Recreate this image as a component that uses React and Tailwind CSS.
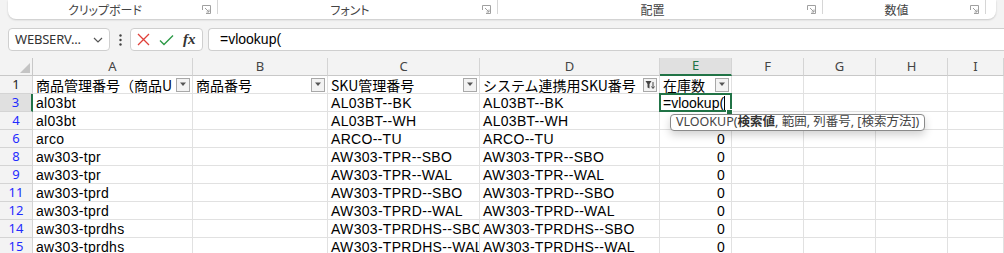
import React from "react";

const rows = [
  { n: "3", a: "al03bt", c: "AL03BT--BK", d: "AL03BT--BK", active: true },
  { n: "4", a: "al03bt", c: "AL03BT--WH", d: "AL03BT--WH", e: "" },
  { n: "6", a: "arco", c: "ARCO--TU", d: "ARCO--TU", e: "0" },
  { n: "8", a: "aw303-tpr", c: "AW303-TPR--SBO", d: "AW303-TPR--SBO", e: "0" },
  { n: "9", a: "aw303-tpr", c: "AW303-TPR--WAL", d: "AW303-TPR--WAL", e: "0" },
  { n: "11", a: "aw303-tprd", c: "AW303-TPRD--SBO", d: "AW303-TPRD--SBO", e: "0" },
  { n: "12", a: "aw303-tprd", c: "AW303-TPRD--WAL", d: "AW303-TPRD--WAL", e: "0" },
  { n: "14", a: "aw303-tprdhs", c: "AW303-TPRDHS--SBO", d: "AW303-TPRDHS--SBO", e: "0" },
  { n: "15", a: "aw303-tprdhs", c: "AW303-TPRDHS--WAL", d: "AW303-TPRDHS--WAL", e: "0" },
];

function Launcher() {
  return (
    <svg width="9" height="9" viewBox="0 0 9 9" className="shrink-0">
      <path d="M0.5 5V0.5H8.5V8.5H4" fill="none" stroke="#a0a0a0" strokeWidth="1" />
      <path d="M3 3L7 7M7 4.5V7H4.5" fill="none" stroke="#a0a0a0" strokeWidth="1" />
    </svg>
  );
}

function Group({ label, width }) {
  return (
    <div className={`flex items-center h-full ${width}`}>
      <span className="flex-1 text-center text-[12px] text-[#444] [font-feature-settings:'palt']">{label}</span>
      <Launcher />
      <div className="w-px h-[14px] bg-[#d6d6d6] ml-[6px] self-start" />
    </div>
  );
}

function DropButton({ filtered }) {
  return (
    <div className="shrink-0 w-[14px] h-[14px] mr-[2px] border border-[#a8a8a8] bg-[#f3f3f3] flex items-center justify-center">
      {filtered ? (
        <svg width="10" height="10" viewBox="0 0 10 10">
          <path d="M0.5 1H6.5L4.5 4V8.5L2.5 7.5V4Z" fill="#444" />
          <path d="M8 2V8M6.5 6.5L8 8.5L9.5 6.5" fill="none" stroke="#444" strokeWidth="1" />
        </svg>
      ) : (
        <svg width="8" height="5" viewBox="0 0 8 5">
          <path d="M1 0.5H7L4 4Z" fill="#555" />
        </svg>
      )}
    </div>
  );
}

const cellBase =
  "h-[18px] border-r border-b border-[#e1e1e1] bg-white overflow-hidden whitespace-nowrap text-[14px] leading-[19px] text-black tracking-[0.3px]";

function HeadCell({ text, filtered }) {
  return (
    <div className={`${cellBase} flex items-center`}>
      <span className="flex-1 min-w-0 overflow-hidden whitespace-nowrap pl-[3px] leading-[19px] self-stretch font-['Noto_Sans_CJK_JP',sans-serif] tracking-normal">
        {text}
      </span>
      <DropButton filtered={filtered} />
    </div>
  );
}

export default function App() {
  const letters = ["A", "B", "C", "D", "E", "F", "G", "H", "I"];
  return (
    <div className="w-[1004px] h-[253px] overflow-hidden bg-[#f3f3f3] font-['Noto_Sans','Noto_Sans_CJK_JP',sans-serif]">
      {/* Ribbon group labels */}
      <div className="h-[19px] ml-[8px] mr-[8px] bg-white rounded-b-[8px] shadow-[0_1px_2px_rgba(0,0,0,0.18)] flex font-['Noto_Sans_CJK_JP',sans-serif]">
        <Group label="クリップボード" width="w-[210px]" />
        <Group label="フォント" width="w-[280px]" />
        <Group label="配置" width="w-[325px]" />
        <Group label="数値" width="w-[163px]" />
      </div>

      {/* Formula bar */}
      <div className="mt-[9px] h-[23px] flex items-stretch pl-[8px]">
        <div className="w-[102px] bg-white border border-[#cfcfcf] rounded-[4px] flex items-center pl-[6px] pr-[6px]">
          <span className="flex-1 text-[13px] text-[#333] tracking-[-0.2px]">WEBSERV...</span>
          <svg width="10" height="6" viewBox="0 0 10 6">
            <path d="M1 1L5 5L9 1" fill="none" stroke="#555" strokeWidth="1.2" />
          </svg>
        </div>
        <div className="w-[20px] flex items-center justify-center">
          <svg width="3" height="12" viewBox="0 0 3 12">
            <circle cx="1.5" cy="1.5" r="1.2" fill="#444" />
            <circle cx="1.5" cy="6" r="1.2" fill="#444" />
            <circle cx="1.5" cy="10.5" r="1.2" fill="#444" />
          </svg>
        </div>
        <div className="w-[73px] bg-white border border-[#cfcfcf] rounded-[4px] flex items-center pl-[6px] gap-[9px]">
          <svg width="13" height="13" viewBox="0 0 13 13">
            <path d="M1 1L12 12M12 1L1 12" stroke="#e0403a" strokeWidth="1.3" />
          </svg>
          <svg width="15" height="12" viewBox="0 0 15 12">
            <path d="M1 6.5L5 10.5L14 1.5" fill="none" stroke="#2d9a47" strokeWidth="1.4" />
          </svg>
          <span className="text-[15px] italic font-bold text-[#333] font-['Liberation_Serif',serif] leading-none">fx</span>
        </div>
        <div className="flex-1 ml-[5px] bg-white border border-[#cfcfcf] border-r-0 rounded-l-[4px] flex items-center pl-[11px]">
          <span className="text-[14px] text-black font-['Liberation_Sans',sans-serif]">=vlookup(</span>
        </div>
      </div>

      {/* Sheet grid */}
      <div className="mt-[7px] grid grid-cols-[33px_160px_135px_152px_180px_72px_72px_72px_72px_56px] font-['Liberation_Sans','Noto_Sans_CJK_JP',sans-serif]">
        {/* column headers */}
        <div className="h-[18px] border-r border-b border-[#c8c8c8] bg-[#f3f3f3] flex items-end justify-end p-[2px]">
          <svg width="10" height="10" viewBox="0 0 10 10">
            <path d="M10 0V10H0Z" fill="#c4c4c4" />
          </svg>
        </div>
        {letters.map((l) => (
          <div
            key={l}
            className={`h-[18px] border-r border-[#d4d4d4] flex items-center justify-center text-[13px] font-['Noto_Sans',sans-serif] ${
              l === "E"
                ? "bg-[#e0e0e0] text-[#217346] border-b-2 border-b-[#217346]"
                : "bg-[#f3f3f3] text-[#444] border-b border-b-[#c8c8c8]"
            }`}
          >
            {l}
          </div>
        ))}

        {/* row 1: table header */}
        <div className="h-[18px] border-r border-b border-[#d4d4d4] bg-[#f3f3f3] flex items-center justify-center text-[13px] text-[#222] font-['Noto_Sans',sans-serif]">
          1
        </div>
        <HeadCell text="商品管理番号（商品U" />
        <HeadCell text="商品番号" />
        <HeadCell text="SKU管理番号" />
        <HeadCell text="システム連携用SKU番号" filtered />
        <HeadCell text="在庫数" />
        <div className={cellBase} />
        <div className={cellBase} />
        <div className={cellBase} />
        <div className={cellBase} />

        {rows.map((r) => (
          <React.Fragment key={r.n}>
            <div
              className={`h-[18px] border-b border-[#d4d4d4] flex items-center justify-center text-[13px] text-[#1f2bff] font-['Noto_Sans',sans-serif] ${
                r.active ? "bg-[#e0e0e0] border-r-2 border-r-[#217346]" : "bg-[#f3f3f3] border-r border-r-[#d4d4d4]"
              }`}
            >
              {r.n}
            </div>
            <div className={`${cellBase} pl-[3px]`}>{r.a}</div>
            <div className={cellBase} />
            <div className={`${cellBase} pl-[3px]`}>{r.c}</div>
            <div className={`${cellBase} pl-[3px]`}>{r.d}</div>
            {r.active ? (
              <div className={`${cellBase} relative overflow-visible pl-[3px] tracking-normal`}>
                <span>=vlookup(</span>
                <span className="inline-block w-px h-[14px] bg-black align-[-2px]" />
                <div className="absolute -left-px -top-px w-[73px] h-[19px] border-2 border-[#217346] pointer-events-none" />
                <div className="absolute right-[-2px] bottom-[-4px] w-[7px] h-[6px] bg-[#217346] border border-white" />
                <div className="absolute left-[10px] top-[20px] z-10 h-[17px] px-[5px] bg-white border border-[#8a8a8a] rounded-[4px] shadow-[0_4px_8px_rgba(0,0,0,0.18)] flex items-center text-[12.5px] text-[#444] font-['Noto_Sans','Noto_Sans_CJK_JP',sans-serif] leading-none">
                  VLOOKUP(<b className="text-[#333]">検索値</b>, 範囲, 列番号, [検索方法])
                </div>
              </div>
            ) : (
              <div className={`${cellBase} text-right pr-[6px]`}>{r.e}</div>
            )}
            <div className={cellBase} />
            <div className={cellBase} />
            <div className={cellBase} />
            <div className={cellBase} />
          </React.Fragment>
        ))}
      </div>
    </div>
  );
}
